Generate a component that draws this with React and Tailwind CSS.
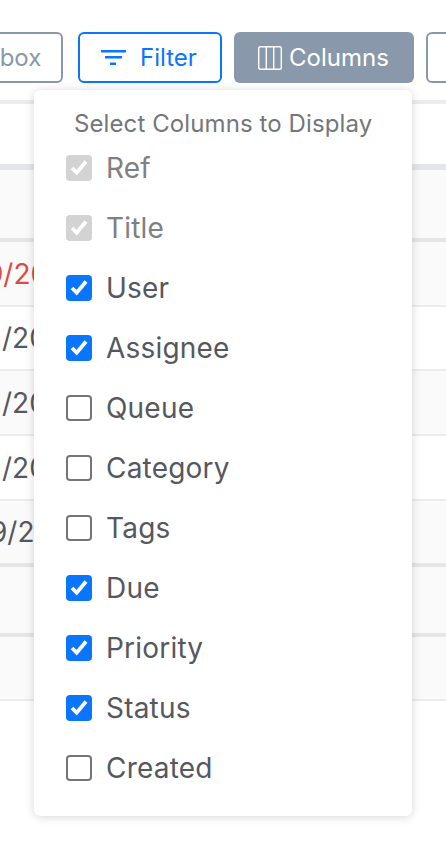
import React from 'react';

const columns = [
	{ label: 'Ref', state: 'locked' },
	{ label: 'Title', state: 'locked' },
	{ label: 'User', state: 'on' },
	{ label: 'Assignee', state: 'on' },
	{ label: 'Queue', state: 'off' },
	{ label: 'Category', state: 'off' },
	{ label: 'Tags', state: 'off' },
	{ label: 'Due', state: 'on' },
	{ label: 'Priority', state: 'on' },
	{ label: 'Status', state: 'on' },
	{ label: 'Created', state: 'off' },
];

function Tick() {
	return (
		<svg viewBox="0 0 26 26" className="h-[26px] w-[26px]">
			<path d="M6 13 L10.7 17.6 L20 6.5" fill="none" stroke="#fff" strokeWidth="3.8" />
		</svg>
	);
}

function Checkbox({ state }) {
	if (state === 'locked') {
		return (
			<span className="h-[26px] w-[26px] rounded bg-[#d3d3d3]">
				<Tick />
			</span>
		);
	}
	if (state === 'on') {
		return (
			<span className="h-[26px] w-[26px] rounded bg-[#0a75ff]">
				<Tick />
			</span>
		);
	}
	return <span className="h-[26px] w-[26px] rounded border-2 border-[#757575] bg-white" />;
}

function Row({ height, line, bg, text, red }) {
	return (
		<div className={`${line} ${bg}`}>
			<div className={`flex items-center text-[28px] ${height} ${red ? 'text-[#dc4a45]' : 'text-[#55585e]'}`}>
				{text}
			</div>
		</div>
	);
}

export default function App() {
	return (
		<div className="relative h-[850px] w-[446px] overflow-hidden bg-white font-['Inter',sans-serif]">
			<div className="flex h-[100px] gap-3 pt-8">
				<button className="ml-[-60px] h-[51px] w-[123px] shrink-0 rounded-md border-2 border-[#8a98ab] pl-[37px] text-left text-2xl text-[#8a98ab]">
					Inbox
				</button>
				<button className="ml-[3px] flex h-[51px] w-[144px] shrink-0 items-center rounded-md border-2 border-[#0a75ff] pl-[21px] text-2xl text-[#0a75ff]">
					<svg viewBox="0 0 25 15" className="mr-[14px] h-[15px] w-[25px]">
						<path d="M0 0h25v2.6H0zM4 6h17v2.6H4zM9 12.4h6V15H9z" fill="#0a75ff" />
					</svg>
					Filter
				</button>
				<button className="flex h-[51px] w-[180px] shrink-0 items-center rounded-md bg-[#8a98ab] pl-6 text-2xl text-white">
					<svg viewBox="0 0 24 24" className="mr-[7px] h-6 w-6" fill="none" stroke="#fff" strokeWidth="1.4">
						<rect x="0.7" y="0.7" width="22.6" height="22.6" rx="1.5" />
						<path d="M8.3 1v22M15.7 1v22" />
					</svg>
					Columns
				</button>
				<button className="h-[51px] w-[100px] shrink-0 rounded-md border-2 border-[#8a98ab]" />
			</div>

			<div className="ml-[-2px]">
				<Row line="border-t-4 border-[#ececec]" bg="bg-white" height="h-[60px]" />
				<Row line="border-t-[6px] border-[#e3e5ea]" bg="bg-[#fafafa]" height="h-[68px]" />
				<Row line="border-t-4 border-[#e6e6e6]" bg="bg-[#fafafa]" height="h-[63px]" text={<span className="ml-[-12px]">9/20</span>} red />
				<Row line="border-t-2 border-[#ececec]" bg="bg-white" height="h-[62px]" text={<span className="pl-[4px]">/20</span>} />
				<Row line="border-t-2 border-[#ececec]" bg="bg-[#fafafa]" height="h-[63px]" text={<span className="pl-[4px]">/20</span>} />
				<Row line="border-t-2 border-[#ececec]" bg="bg-white" height="h-[63px]" text={<span className="pl-[4px]">/20</span>} />
				<Row line="border-t-2 border-[#ececec]" bg="bg-[#fafafa]" height="h-[62px]" text={<span className="ml-[-8px]">9/2</span>} />
				<Row line="border-t-4 border-[#e6e6e6]" bg="bg-[#fafafa]" height="h-[66px]" />
				<Row line="border-t-4 border-[#e6e6e6]" bg="bg-[#fafafa]" height="h-[62px]" />
				<Row line="border-t-2 border-[#ececec]" bg="bg-white" height="h-[150px]" />
			</div>

			{/* column picker popover */}
			<div className="absolute left-[34px] top-[90px] w-[378px] rounded-md bg-white px-8 pb-[18px] pt-[18px] shadow-[0_1px_10px_rgba(0,0,0,0.16)]">
				<div className="ml-2 h-[30px] whitespace-nowrap text-2xl leading-[32px] tracking-[0.1px] text-[#75767a]">Select Columns to Display</div>
				{columns.map((col) => (
					<label key={col.label} className="flex h-[60px] items-center gap-[14px]">
						<Checkbox state={col.state} />
						<span className={`text-[28px] tracking-[0.2px] ${col.state === 'locked' ? 'text-[#808080]' : 'text-[#55585e]'}`}>{col.label}</span>
					</label>
				))}
			</div>
		</div>
	);
}
